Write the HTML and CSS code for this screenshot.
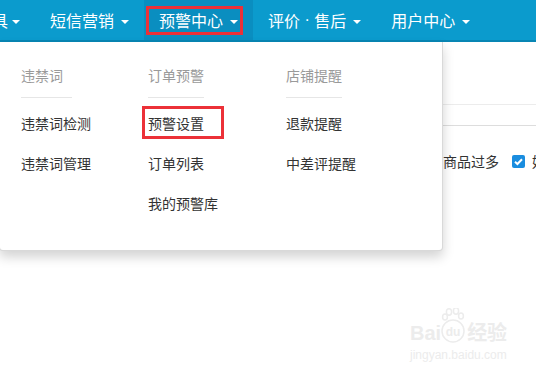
FILE: index.html
```html
<!DOCTYPE html>
<html lang="zh-CN">
<head>
    <meta charset="UTF-8">
    <title>预警中心</title>
    <link rel="stylesheet" href="styles.css">
</head>
<body>
<div class="topbar">
    <ul class="nav">
        <li class="nav-item first">工具<span class="caret"></span></li>
        <li class="nav-item">短信营销<span class="caret"></span></li>
        <li class="nav-item active">预警中心<span class="caret"></span><span class="mark"></span></li>
        <li class="nav-item">评价<span class="dot"> · </span>售后<span class="caret"></span></li>
        <li class="nav-item">用户中心<span class="caret"></span></li>
    </ul>
    <div class="dropdown">
        <ul class="menu-col">
            <li class="menu-title">违禁词</li>
            <li class="menu-link">违禁词检测</li>
            <li class="menu-link">违禁词管理</li>
        </ul>
        <ul class="menu-col">
            <li class="menu-title">订单预警</li>
            <li class="menu-link marked">预警设置</li>
            <li class="menu-link">订单列表</li>
            <li class="menu-link">我的预警库</li>
        </ul>
        <ul class="menu-col">
            <li class="menu-title">店铺提醒</li>
            <li class="menu-link">退款提醒</li>
            <li class="menu-link">中差评提醒</li>
        </ul>
    </div>
</div>
<div class="main">
    <div class="panel-head"></div>
    <div class="panel-sub"></div>
    <div class="filters">
        <span class="label">商品过多</span>
        <span class="check">
            <svg width="13" height="13" viewBox="0 0 13 13"><path d="M3 6.8 L5.4 9 L10 4.2" fill="none" stroke="#fff" stroke-width="2"/></svg>
        </span>
        <span class="label next">好评</span>
    </div>
</div>
<div class="watermark">
    <div class="wm-logo">
        <span>Bai</span>
        <svg width="26" height="36" viewBox="0 0 26 36">
            <ellipse cx="8" cy="4" rx="2.6" ry="3.2"/>
            <ellipse cx="15" cy="3" rx="2.6" ry="3.2"/>
            <ellipse cx="20" cy="8" rx="2.4" ry="3"/>
            <ellipse cx="4" cy="9" rx="2.4" ry="3"/>
            <circle cx="12" cy="23" r="11"/>
            <text x="12" y="28" text-anchor="middle">du</text>
        </svg>
        <span>经验</span>
    </div>
    <div class="wm-url">jingyan.baidu.com</div>
</div>
</body>
</html>
```

FILE: styles.css
```css
body {
    margin: 0;
    font-family: "Noto Sans CJK SC", "Liberation Sans", sans-serif;
    background-color: #ffffff;
    color: #333333;
    height: 372px;
    overflow: hidden;
}
ul {
    list-style: none;
    margin: 0;
    padding: 0;
}
.topbar {
    position: relative;
    height: 40px;
    background-color: #0b9bcd;
    border-bottom: 2px solid #0886b4;
}
.nav {
    display: flex;
    height: 40px;
    margin-left: -39px; /* first menu is scrolled off the left edge */
}
.nav-item {
    display: flex;
    align-items: center;
    padding: 0 15px;
    color: #ffffff;
    font-size: 16px;
    white-space: pre;
}
.nav-item .dot {
    font-family: "Liberation Sans", sans-serif;
}
.nav-item.active {
    background-color: #0a8ec0;
    position: relative;
}
.caret {
    width: 0;
    height: 0;
    margin-left: 7px;
    margin-top: 4px;
    border-top: 4px solid #ffffff;
    border-left: 4px solid transparent;
    border-right: 4px solid transparent;
}
.nav-item.first .caret {
    margin-left: 4px;
}
/* red annotation box */
.mark {
    position: absolute;
    left: 2px;
    top: 6px;
    width: 97px;
    height: 29px;
    box-sizing: border-box;
    border: 3px solid #ec3138;
}
.dropdown {
    position: absolute;
    left: -1px;
    top: 42px;
    width: 444px;
    height: 209px;
    box-sizing: border-box;
    padding: 23px 0 0 21px;
    display: grid;
    grid-template-columns: 127px 138px 1fr;
    align-items: start;
    background-color: #ffffff;
    border: 1px solid rgba(0, 0, 0, 0.15);
    border-top: 0;
    border-radius: 0 0 4px 4px;
    box-shadow: 0 6px 12px rgba(0, 0, 0, 0.175);
    z-index: 10;
}
.menu-col {
    display: flex;
    flex-direction: column;
    align-items: flex-start;
}
.menu-title {
    font-size: 14px;
    line-height: 20px;
    color: #9a9a9a;
    min-width: 51px;
    padding-bottom: 12px;
    margin-bottom: 5px;
    border-bottom: 1px solid #e6e6e6;
}
.menu-link {
    font-size: 14px;
    line-height: 20px;
    padding: 10px 0;
    color: #333333;
}
.menu-link.marked {
    position: relative;
}
.menu-link.marked::after {
    content: "";
    position: absolute;
    left: -6px;
    top: 3px;
    width: 82px;
    height: 33px;
    box-sizing: border-box;
    border: 3px solid #ec3138;
}
.panel-head {
    height: 62px;
    border-bottom: 1px solid #ececec;
}
.panel-sub {
    height: 20px;
    border-bottom: 1px solid #dddddd;
}
.filters {
    display: flex;
    align-items: center;
    padding: 25px 0 0 443px;
    font-size: 14px;
    line-height: 20px;
    white-space: nowrap;
}
.check {
    display: flex;
    width: 13px;
    height: 13px;
    margin-left: 13px;
    border-radius: 2px;
    background-color: #1a8ddf;
}
.label.next {
    margin-left: 7px;
}
.watermark {
    position: absolute;
    left: 410px;
    top: 308px;
    color: #ececec;
    font-family: "Liberation Sans", "Noto Sans CJK SC", sans-serif;
}
.wm-logo {
    display: flex;
    align-items: flex-end;
    font-size: 20px;
    font-weight: bold;
    line-height: 22px;
}
.wm-logo svg {
    fill: none;
    stroke: #ececec;
    stroke-width: 1.5;
}
.wm-logo svg text {
    fill: #ececec;
    stroke: none;
    font-size: 12px;
    font-weight: bold;
}
.wm-url {
    font-size: 12px;
    line-height: 16px;
    margin-top: 3px;
}
```
